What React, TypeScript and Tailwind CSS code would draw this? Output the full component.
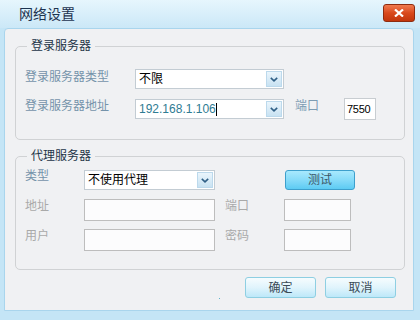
import React from "react";

const FONT = { fontFamily: '"Liberation Sans", "Noto Sans CJK SC", sans-serif' };

function Chevron() {
  return (
    <svg width="8" height="5" viewBox="0 0 8 5">
      <path d="M0.8 0.8 L4 3.8 L7.2 0.8" fill="none" stroke="#2f5f86" strokeWidth="1.6" />
    </svg>
  );
}

function Dropdown({ w, children, className = "" }: { w: string; children?: React.ReactNode; className?: string }) {
  return (
    <div className={`${w} h-[20px] flex border border-[#c3ccd3] bg-white ${className}`}>
      <div className="flex-1 flex items-center pl-[3px] text-[12px] leading-[14px] text-black overflow-hidden whitespace-nowrap">
        {children}
      </div>
      <div className="w-[16px] my-[1px] mr-[1px] flex items-center justify-center border border-[#bcd9ec] bg-gradient-to-b from-[#eaf5fc] to-[#c8e2f2]">
        <Chevron />
      </div>
    </div>
  );
}

function Input({ w, children, disabled = false, className = "" }: { w: string; children?: React.ReactNode; disabled?: boolean; className?: string }) {
  return (
    <div
      className={`${w} h-[22px] flex items-center pl-[2px] text-[12px] leading-[14px] text-black border ${
        disabled ? "border-[#bdbdbd] bg-[#fcfcfd]" : "border-[#c8cdd1] bg-white"
      } ${className}`}
    >
      {children}
    </div>
  );
}

function Btn({ children }: { children: React.ReactNode }) {
  return (
    <div className="w-[71px] h-[21px] flex items-center justify-center rounded-[3px] border border-[#8ecfe2] bg-gradient-to-b from-[#f6fcfe] via-[#e0f4fc] to-[#bde8f9] text-[12px] leading-[14px] text-[#3a4a56]">
      {children}
    </div>
  );
}

export default function App() {
  return (
    <div className="w-[420px] h-[320px] flex flex-col bg-[#c4e5f6] overflow-hidden" style={FONT}>
      {/* Title bar */}
      <div className="h-[28px] flex justify-between pl-[19px] pr-[5px] bg-gradient-to-b from-[#e6f6fd] to-[#cbe8f7]">
        <div className="mt-[5px] text-[14px] leading-[18px] text-[#1c3350]">网络设置</div>
        <div className="mt-[4px] w-[32px] h-[18px] flex items-center justify-center rounded-[3px] border border-[#8e2c10] bg-gradient-to-b from-[#f07a4e] via-[#d9491c] to-[#c2360c]">
          <svg width="10" height="8" viewBox="0 0 10 8">
            <path d="M1 0.5 L9 7.5 M9 0.5 L1 7.5" stroke="white" strokeWidth="2.2" />
          </svg>
        </div>
      </div>

      {/* Content */}
      <div className="relative flex-1 ml-[4px] mr-[6px] mb-[9px] border border-[#a9d5ed] rounded-t-[4px] bg-[#f0f1f3] flex flex-col">
        {/* Group 1 */}
        <div className="relative mt-[17px] ml-[10px] w-[390px] h-[94px] border border-[#d0d2d4] rounded-[5px] pt-[22px] pl-[9px]">
          <div className="absolute left-[11px] top-[-8px] px-[4px] bg-[#f0f1f3] text-[12px] leading-[14px] text-[#233447]">
            登录服务器
          </div>
          <div className="flex items-start h-[20px]">
            <div className="w-[110px] pt-[1px] text-[12px] leading-[14px] text-[#7593aa]">登录服务器类型</div>
            <Dropdown w="w-[149px]">不限</Dropdown>
          </div>
          <div className="flex items-start mt-[9px] h-[22px]">
            <div className="w-[110px] pt-[1px] text-[12px] leading-[14px] text-[#7593aa]">登录服务器地址</div>
            <Dropdown w="w-[149px]" className="mt-[1px]">
              <span className="text-[#2f7c93]">192.168.1.106</span>
              <span className="inline-block w-[1px] h-[13px] bg-black" />
            </Dropdown>
            <div className="ml-[11px] w-[49px] pt-[1px] text-[12px] leading-[14px] text-[#7d9cb3]">端口</div>
            <Input w="w-[32px]">
              <span className="text-[11px] tracking-[-0.3px]">7550</span>
            </Input>
          </div>
        </div>

        {/* Group 2 */}
        <div className="relative mt-[16px] ml-[10px] w-[390px] h-[114px] border border-[#d0d2d4] rounded-[5px] pt-[13px] pl-[9px]">
          <div className="absolute left-[11px] top-[-8px] px-[4px] bg-[#f0f1f3] text-[12px] leading-[14px] text-[#233447]">
            代理服务器
          </div>
          <div className="flex items-start h-[20px]">
            <div className="w-[59px] -mt-[1px] text-[12px] leading-[14px] text-[#7593aa]">类型</div>
            <Dropdown w="w-[131px]">不使用代理</Dropdown>
            <div className="ml-[70px] w-[70px] h-[20px] flex items-center justify-center rounded-[3px] border border-[#3d9fcc] bg-gradient-to-b from-[#a8e9fd] via-[#86dbf9] to-[#5ccbf3] text-[12px] leading-[14px] text-[#3b5666]">
              测试
            </div>
          </div>
          <div className="flex items-start mt-[9px] h-[22px]">
            <div className="w-[59px] text-[12px] leading-[14px] text-[#a9a9a9]">地址</div>
            <Input w="w-[131px]" disabled />
            <div className="ml-[10px] w-[59px] text-[12px] leading-[14px] text-[#a9a9a9]">端口</div>
            <Input w="w-[67px]" disabled />
          </div>
          <div className="flex items-start mt-[8px] h-[22px]">
            <div className="w-[59px] text-[12px] leading-[14px] text-[#a9a9a9]">用户</div>
            <Input w="w-[131px]" disabled />
            <div className="ml-[10px] w-[59px] text-[12px] leading-[14px] text-[#a9a9a9]">密码</div>
            <Input w="w-[67px]" disabled />
          </div>
        </div>

        {/* Buttons */}
        <div className="flex justify-end gap-[9px] mt-[7px] mr-[17px]">
          <Btn>确定</Btn>
          <Btn>取消</Btn>
        </div>

        <div className="absolute left-[214px] top-[269px] w-[1px] h-[1px] bg-[#5fb4cc]" />
      </div>
    </div>
  );
}
